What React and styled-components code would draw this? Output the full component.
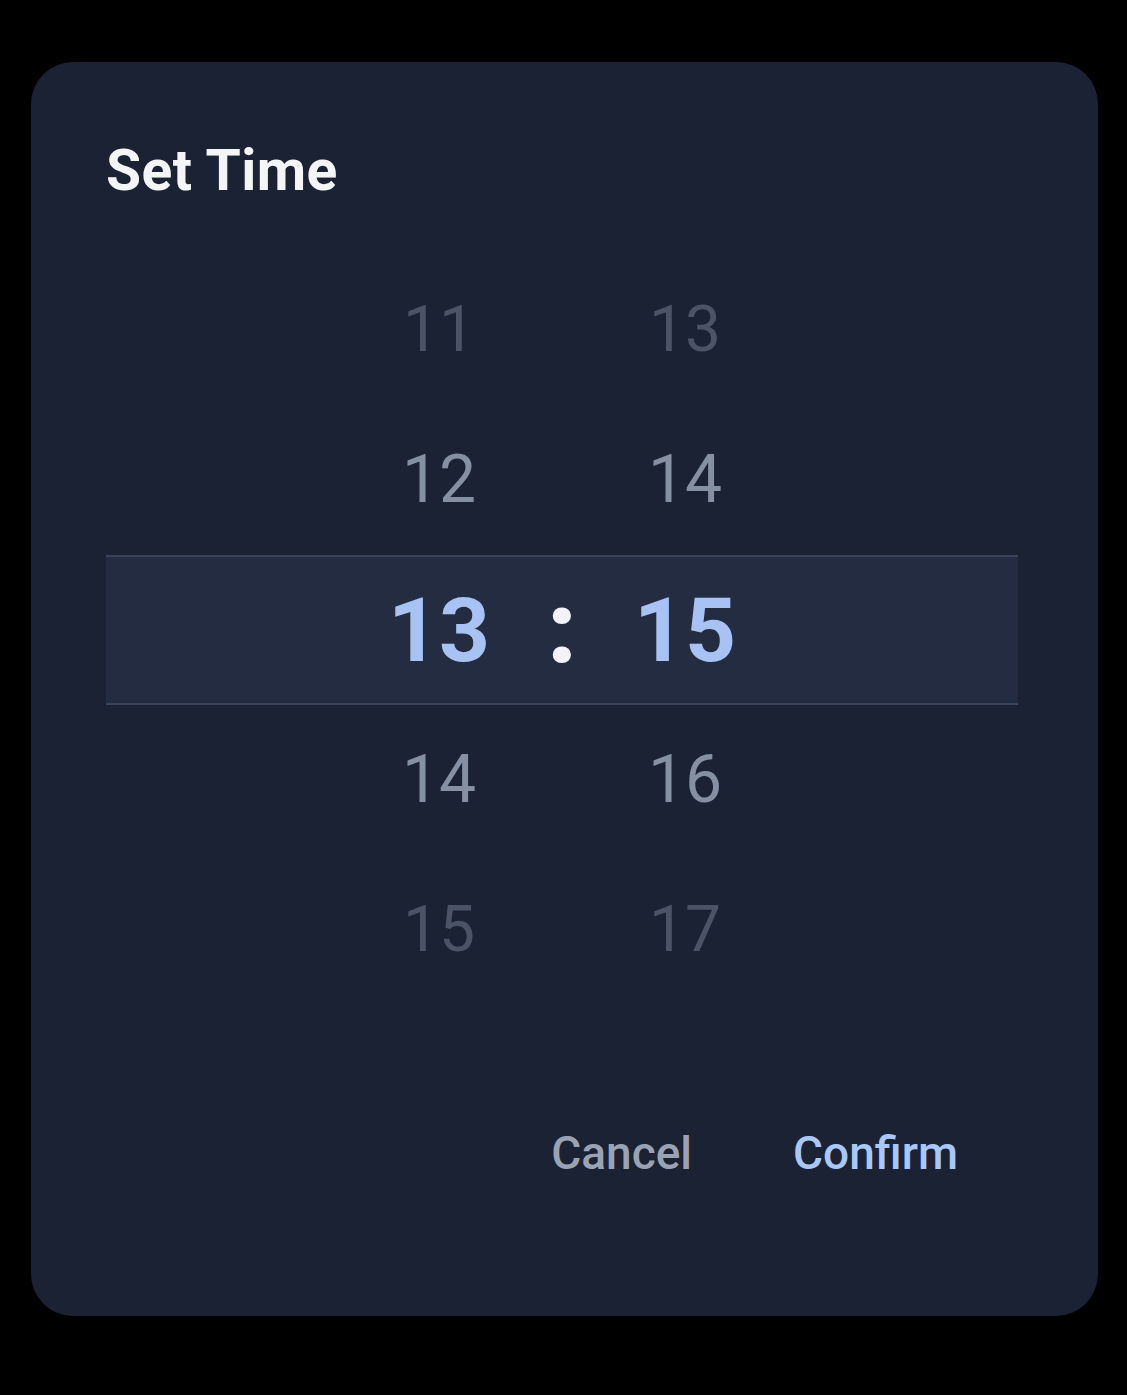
import React from "react";
import styled, { createGlobalStyle } from "styled-components";

const GlobalStyle = createGlobalStyle`
  html, body {
    margin: 0;
    padding: 0;
    background: #000;
  }
  body {
    font-family: Roboto, "Noto Sans", "Liberation Sans", sans-serif;
  }
`;

const rows = [
  { hour: "11", minute: "13", tone: "far" },
  { hour: "12", minute: "14", tone: "near" },
  { hour: "13", minute: "15", tone: "selected" },
  { hour: "14", minute: "16", tone: "near" },
  { hour: "15", minute: "17", tone: "far" },
];

const App = () => {
  return (
    <Page>
      <GlobalStyle />
      <Card>
        <Title>Set Time</Title>
        <Picker>
          {rows.map((row) => (
            <Row key={row.hour} selected={row.tone === "selected"}>
              <Digit tone={row.tone}>{row.hour}</Digit>
              <Colon>{row.tone === "selected" ? ":" : ""}</Colon>
              <Digit tone={row.tone}>{row.minute}</Digit>
            </Row>
          ))}
        </Picker>
        <Actions>
          <ActionButton>Cancel</ActionButton>
          <ActionButton primary>Confirm</ActionButton>
        </Actions>
      </Card>
    </Page>
  );
};

export default App;

const Page = styled.div`
  width: 1127px;
  height: 1395px;
  background: #000;
  padding: 62px 0 0 31px;
  box-sizing: border-box;
`;

const Card = styled.div`
  width: 1067px;
  height: 1254px;
  box-sizing: border-box;
  background: #1b2233;
  border-radius: 42px;
  padding: 0 80px 0 75px;
  display: flex;
  flex-direction: column;
`;

const Title = styled.h2`
  margin: 0;
  padding-top: 80px;
  height: 193px;
  box-sizing: border-box;
  font-size: 57px;
  line-height: 1;
  font-weight: 700;
  color: #f4f5f7;
  letter-spacing: 0.4px;
`;

const Picker = styled.div`
  display: flex;
  flex-direction: column;
`;

const Row = styled.div`
  height: 150px;
  box-sizing: border-box;
  display: grid;
  grid-template-columns: 160px 86px 160px;
  justify-content: center;
  align-items: center;
  background: ${({ selected }) => (selected ? "#232c40" : "transparent")};
  border-top: 2px solid ${({ selected }) => (selected ? "#3a4459" : "transparent")};
  border-bottom: 2px solid ${({ selected }) => (selected ? "#3a4459" : "transparent")};
`;

const toneStyles = {
  far: { color: "#4b5467", size: "64px", weight: 400 },
  near: { color: "#8690a3", size: "66px", weight: 400 },
  selected: { color: "#a8c3f3", size: "89px", weight: 700 },
};

const Digit = styled.span`
  text-align: center;
  line-height: 1;
  color: ${({ tone }) => toneStyles[tone].color};
  font-size: ${({ tone }) => toneStyles[tone].size};
  font-weight: ${({ tone }) => toneStyles[tone].weight};
`;

const Colon = styled.span`
  text-align: center;
  line-height: 1;
  font-size: 100px;
  font-weight: 900;
  color: #f2f4f8;
  transform: translateY(-2px);
`;

const Actions = styled.div`
  margin-top: auto;
  height: 310px;
  display: flex;
  justify-content: flex-end;
  align-items: flex-start;
  gap: 101px;
  padding-right: 60px;
`;

const ActionButton = styled.button`
  margin-top: 124px;
  padding: 0;
  border: none;
  background: none;
  font-family: Roboto, "Noto Sans", "Liberation Sans", sans-serif;
  font-size: 46px;
  line-height: 1;
  font-weight: 500;
  color: ${({ primary }) => (primary ? "#a9c8f8" : "#9aa3b4")};
  cursor: pointer;
`;
